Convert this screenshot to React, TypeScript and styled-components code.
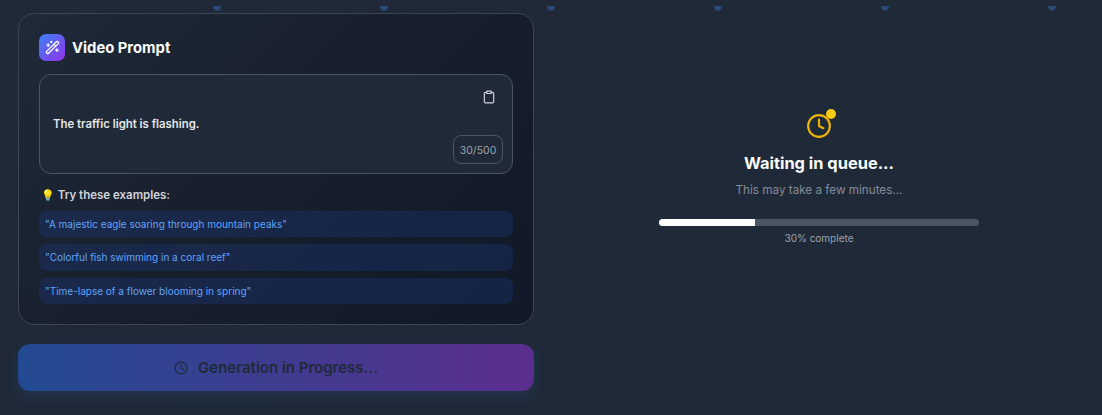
import React from "react";
import styled, { createGlobalStyle } from "styled-components";
import { Clock, Clipboard, WandSparkles } from "lucide-react";

const Global = createGlobalStyle`
  html, body { margin: 0; padding: 0; height: 100%; background: #1f2937; }
  body { font-family: Inter, "Liberation Sans", sans-serif; }
  #root { height: 100%; }
  * { box-sizing: border-box; }
`;

const Page = styled.div`
  position: relative;
  width: 1102px;
  height: 415px;
  overflow: hidden;
  display: grid;
  grid-template-columns: 534px 1fr;
  background: linear-gradient(135deg, #1f2937 0%, #1f2a38 100%);
`;

const DotRow = styled.div`
  position: absolute;
  top: 6px;
  left: 167px;
  right: 0;
  height: 5px;
  background: radial-gradient(circle at 50px 1px, #2b4a7a 3.4px, transparent 4px) 0 0 / 167px 5px repeat-x;
`;

const LeftColumn = styled.div`
  display: flex;
  flex-direction: column;
  gap: 19px;
  padding: 13px 0 0 18px;
`;

const Card = styled.section`
  height: 312px;
  padding: 20px;
  border: 1px solid #3b4452;
  border-radius: 16px;
  background: linear-gradient(135deg, #1f2937 0%, #18202e 45%, #111827 100%);
  display: flex;
  flex-direction: column;
`;

const CardHeader = styled.header`
  display: flex;
  align-items: center;
  gap: 7px;
  height: 27px;
  flex: none;
`;

const IconTile = styled.div`
  width: 26px;
  height: 27px;
  border-radius: 7px;
  background: linear-gradient(135deg, #3b82f6 0%, #9333ea 100%);
  display: flex;
  align-items: center;
  justify-content: center;
  color: #fff;
`;

const CardTitle = styled.h2`
  margin: 0;
  padding-top: 1px;
  font-size: 14.8px;
  line-height: 27px;
  font-weight: 700;
  color: #f9fafb;
`;

const PromptBox = styled.div`
  position: relative;
  flex: none;
  margin-top: 13px;
  height: 100px;
  border: 1px solid #4b5563;
  border-radius: 12px;
  background: #1f2937;
  display: flex;
  align-items: center;
  padding: 0 13px;
`;

const PromptText = styled.p`
  margin: 0;
  font-size: 11.35px;
  line-height: 16px;
  font-weight: 600;
  color: #e5e7eb;
`;

const CopyButton = styled.button`
  position: absolute;
  top: 15px;
  right: 16px;
  padding: 0;
  border: 0;
  background: none;
  color: #d1d5db;
  display: flex;
`;

const Counter = styled.span`
  position: absolute;
  right: 9px;
  bottom: 9px;
  width: 50px;
  height: 29px;
  padding-top: 1px;
  border: 1px solid #4b5563;
  border-radius: 8px;
  font-size: 10.5px;
  color: #9ca3af;
  display: flex;
  align-items: center;
  justify-content: center;
`;

const ExamplesLabel = styled.div`
  flex: none;
  margin-top: 13px;
  height: 16px;
  padding-left: 2px;
  display: flex;
  align-items: center;
  gap: 3px;
  font-size: 11.5px;
  font-weight: 600;
  color: #d1d5db;
`;

const Bulb = styled.span`
  font-size: 11px;
  font-family: "Noto Color Emoji", "DejaVu Sans", sans-serif;
  color: #fbbf24;
`;

const ExampleList = styled.div`
  margin-top: 7.5px;
  display: flex;
  flex-direction: column;
  gap: 7px;
`;

const Example = styled.div`
  height: 26.5px;
  flex: none;
  border-radius: 8px;
  background: rgba(30, 58, 138, 0.3);
  padding: 0 6px;
  display: flex;
  align-items: center;
  font-size: 10px;
  color: #60a5fa;
`;

const GenerateButton = styled.button`
  height: 47px;
  border: 0;
  border-radius: 12px;
  background: linear-gradient(90deg, #224a92 0%, #5b2e8e 100%);
  box-shadow: 0 6px 14px rgba(59, 130, 246, 0.12);
  color: #1f2937;
  font-family: inherit;
  font-size: 15px;
  font-weight: 600;
  display: flex;
  align-items: center;
  justify-content: center;
  gap: 10px;
`;

const StatusPane = styled.div`
  display: flex;
  flex-direction: column;
  align-items: center;
  padding: 109px 0 0 2px;
`;

const StatusIcon = styled.div`
  position: relative;
  width: 26px;
  height: 30px;
  color: #eab308;
  display: flex;
  align-items: flex-end;
  justify-content: center;
`;

const StatusDot = styled.span`
  position: absolute;
  top: 0;
  right: -4px;
  width: 10px;
  height: 10px;
  border-radius: 50%;
  background: #facc15;
`;

const StatusTitle = styled.h3`
  margin: 13px 0 0;
  font-size: 16.4px;
  line-height: 22px;
  font-weight: 700;
  color: #f9fafb;
`;

const StatusText = styled.p`
  margin: 8px 0 0;
  font-size: 11.7px;
  line-height: 16px;
  color: #858c99;
`;

const Track = styled.div`
  margin-top: 21px;
  width: 320px;
  height: 7px;
  border-radius: 4px;
  background: #4b5563;
  overflow: hidden;
`;

const Fill = styled.div`
  height: 100%;
  background: #fff;
`;

const ProgressLabel = styled.div`
  margin-top: 5px;
  font-size: 10px;
  line-height: 14px;
  color: #9ca3af;
`;

const examples = [
  "A majestic eagle soaring through mountain peaks",
  "Colorful fish swimming in a coral reef",
  "Time-lapse of a flower blooming in spring",
];

export default function App() {
  return (
    <Page>
      <Global />
      <DotRow />
      <LeftColumn>
        <Card>
          <CardHeader>
            <IconTile>
              <WandSparkles size={15} strokeWidth={2} />
            </IconTile>
            <CardTitle>Video Prompt</CardTitle>
          </CardHeader>
          <PromptBox>
            <PromptText>The traffic light is flashing.</PromptText>
            <CopyButton>
              <Clipboard size={14} strokeWidth={2} />
            </CopyButton>
            <Counter>30/500</Counter>
          </PromptBox>
          <ExamplesLabel>
            <Bulb>💡</Bulb>
            Try these examples:
          </ExamplesLabel>
          <ExampleList>
            {examples.map((e) => (
              <Example key={e}>"{e}"</Example>
            ))}
          </ExampleList>
        </Card>
        <GenerateButton>
          <Clock size={14} strokeWidth={2} />
          Generation in Progress...
        </GenerateButton>
      </LeftColumn>
      <StatusPane>
        <StatusIcon>
          <Clock size={26} strokeWidth={2} />
          <StatusDot />
        </StatusIcon>
        <StatusTitle>Waiting in queue...</StatusTitle>
        <StatusText>This may take a few minutes...</StatusText>
        <Track>
          <Fill style={{ width: "30%" }} />
        </Track>
        <ProgressLabel>30% complete</ProgressLabel>
      </StatusPane>
    </Page>
  );
}
